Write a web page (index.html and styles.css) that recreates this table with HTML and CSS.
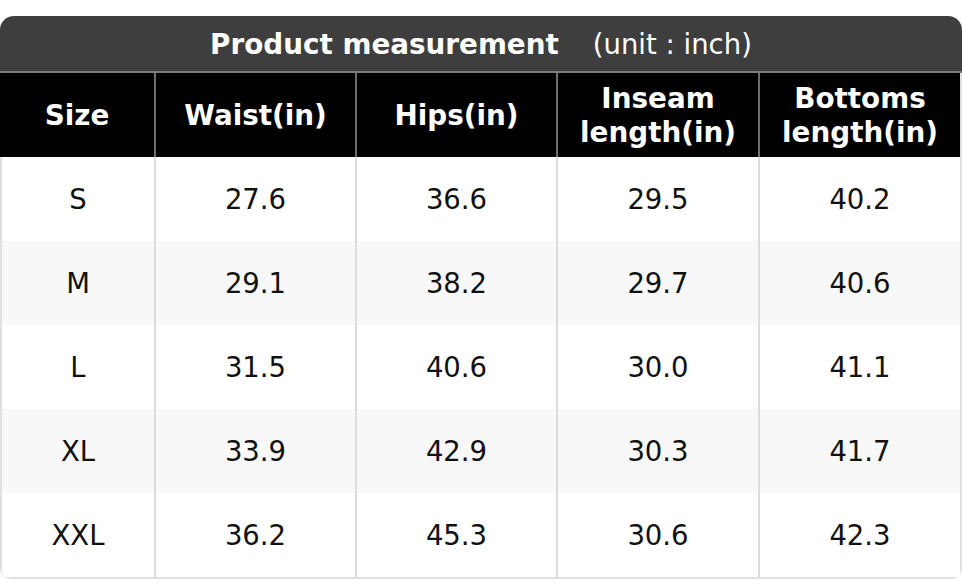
FILE: index.html
```html
<!DOCTYPE html>
<html>
<head>
<meta charset="utf-8">
<link rel="stylesheet" href="styles.css">
</head>
<body>
<div class="sheet">
  <div class="title"><span class="title-main">Product measurement</span><span class="title-unit">(unit : inch)</span></div>
  <div class="grid">
    <div class="hcell">Size</div>
    <div class="hcell">Waist(in)</div>
    <div class="hcell">Hips(in)</div>
    <div class="hcell">Inseam<br>length(in)</div>
    <div class="hcell">Bottoms<br>length(in)</div>

    <div class="cell">S</div><div class="cell">27.6</div><div class="cell">36.6</div><div class="cell">29.5</div><div class="cell">40.2</div>
    <div class="cell alt">M</div><div class="cell alt">29.1</div><div class="cell alt">38.2</div><div class="cell alt">29.7</div><div class="cell alt">40.6</div>
    <div class="cell">L</div><div class="cell">31.5</div><div class="cell">40.6</div><div class="cell">30.0</div><div class="cell">41.1</div>
    <div class="cell alt">XL</div><div class="cell alt">33.9</div><div class="cell alt">42.9</div><div class="cell alt">30.3</div><div class="cell alt">41.7</div>
    <div class="cell">XXL</div><div class="cell">36.2</div><div class="cell">45.3</div><div class="cell">30.6</div><div class="cell">42.3</div>
  </div>
</div>
</body>
</html>
```
FILE: styles.css
```css
html, body {
  margin: 0;
  padding: 0;
  background: #ffffff;
}
body {
  font-family: "DejaVu Sans", "Liberation Sans", sans-serif;
  font-size: 27.5px;
  color: #111111;
}
.sheet {
  width: 962px;
  margin-top: 16px;
  border-radius: 14px 14px 10px 10px;
  overflow: hidden;
}
.title {
  height: 55px;
  padding-top: 1px;
  box-sizing: border-box;
  background: #3e3e3e;
  border-bottom: 2px solid #7c7c7c;
  color: #ffffff;
  display: flex;
  align-items: center;
  justify-content: center;
  height: 57px;
}
.title-main {
  font-weight: bold;
  font-size: 27.8px;
}
.title-unit {
  margin-left: 34px;
}
.grid {
  display: grid;
  grid-template-columns: 152px 201px 201px 202px 202px;
  grid-auto-rows: 84px;
  border: 2px solid #e0e0e0;
  border-top: none;
  border-radius: 0 0 10px 10px;
}
.hcell, .cell {
  display: flex;
  align-items: center;
  justify-content: center;
  text-align: center;
  line-height: 34px;
  box-sizing: border-box;
}
.hcell {
  background: #000000;
  color: #ffffff;
  font-weight: bold;
  font-size: 27.8px;
  padding-top: 1px;
}
.hcell + .hcell {
  border-left: 2px solid #6e6e6e;
}
.cell {
  background: #ffffff;
  border-left: 2px solid #dcdcdc;
}
.cell:nth-child(5n+1) {
  border-left: none;
}
.cell.alt {
  background: #f8f8f8;
}
.hcell:first-child {
  margin-left: -2px;
  width: calc(100% + 2px);
}
```
